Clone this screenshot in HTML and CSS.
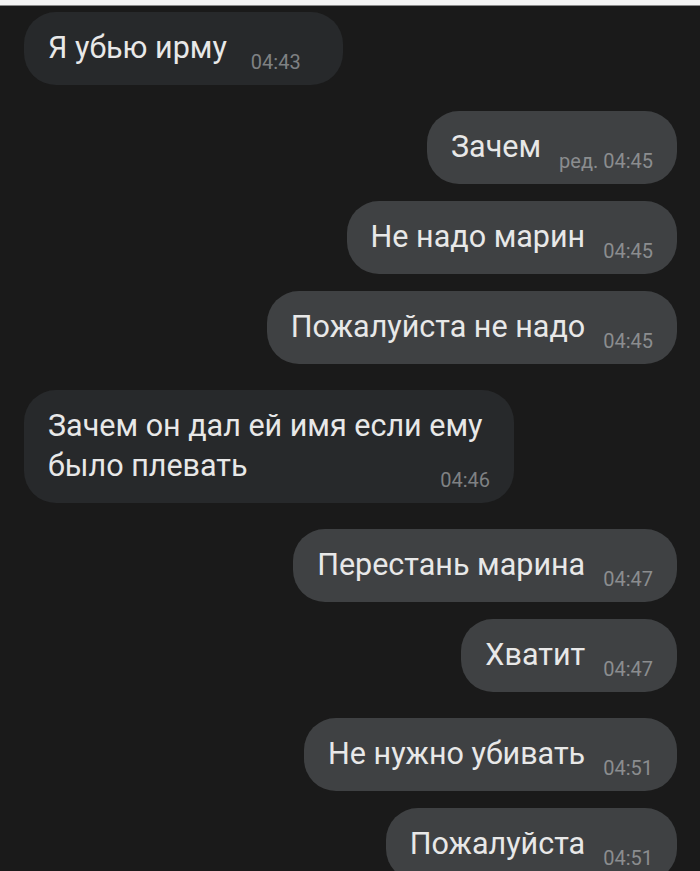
FILE: index.html
```html
<!DOCTYPE html>
<html>
  <head>
    <meta charset="utf-8" />
    <title>Чат</title>
    <meta name="viewport" content="width=device-width, initial-scale=1.0" />
    <link rel="stylesheet" href="styles.css">
  </head>
  <body>
    <div class="status-strip"></div>

    <main class="chat">
      <div class="group">
        <div class="msg msg-in">Я убью ирму<span class="time time-wide">04:43</span></div>
      </div>

      <div class="group">
        <div class="msg msg-out">Зачем<span class="time">ред. 04:45</span></div>
        <div class="msg msg-out">Не надо марин<span class="time">04:45</span></div>
        <div class="msg msg-out">Пожалуйста не надо<span class="time">04:45</span></div>
      </div>

      <div class="group">
        <div class="msg msg-in">Зачем он дал ей имя если ему было плевать<span class="time">04:46</span></div>
      </div>

      <div class="group">
        <div class="msg msg-out">Перестань марина<span class="time">04:47</span></div>
        <div class="msg msg-out">Хватит<span class="time">04:47</span></div>
      </div>

      <div class="group">
        <div class="msg msg-out">Не нужно убивать<span class="time">04:51</span></div>
        <div class="msg msg-out">Пожалуйста<span class="time">04:51</span></div>
      </div>
    </main>
  </body>
</html>
```

FILE: styles.css
```css
body {
  margin: 0;
  background: #1a1a1a;
  font-family: Roboto, "Noto Sans", sans-serif;
  color: #e8e8e8;
  height: 871px;
  overflow: hidden;
}

/* light strip left over at the top of the screenshot */
.status-strip {
  height: 5px;
  background: #f4f4f4;
  border-bottom: 1px solid #8a8a8a;
}

.chat {
  display: flex;
  flex-direction: column;
  gap: 26px;
  padding: 6px 23px 0 24px;
}

.group {
  display: flex;
  flex-direction: column;
  gap: 17px;
}

.msg {
  box-sizing: border-box;
  max-width: 490px;
  padding: 16px 24px 17px;
  border-radius: 32px;
  font-size: 30.5px;
  line-height: 40px;
}

.msg-in {
  align-self: flex-start;
  background: #27292b;
}

.msg-out {
  align-self: flex-end;
  background: #3f4143;
}

/**
 * Time floats to the end of the last line and drops a little
 */
.time {
  float: right;
  margin: 28px 0 0 18px;
  font-size: 20px;
  line-height: 12px;
  color: #8b8d8f;
}

.msg-in .time {
  color: #7f8183;
}

.time-wide {
  margin: 28px 18px 0 24px;
}
```
